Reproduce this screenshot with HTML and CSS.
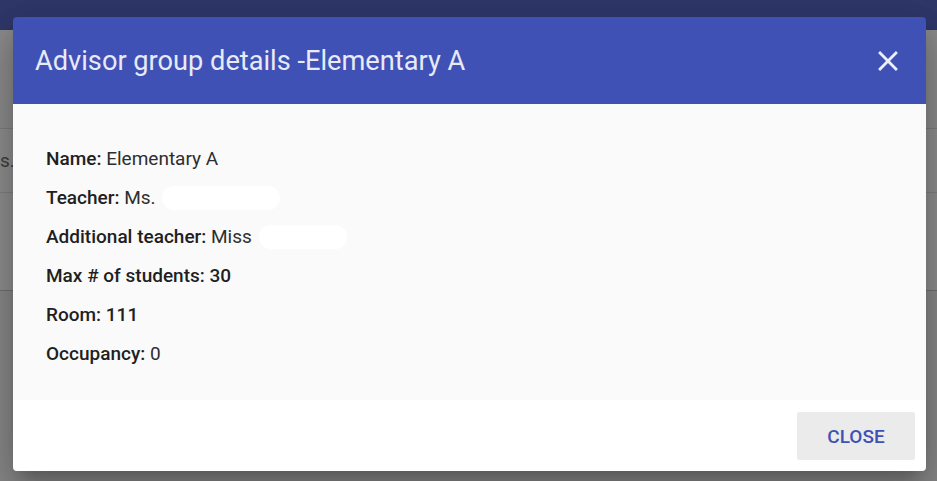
FILE: index.html
```html
<!DOCTYPE html>
<html>
<head>
<meta charset="utf-8">
<link rel="stylesheet" href="styles.css">
</head>
<body>
<div class="app">
  <div class="appbar"></div>
  <div class="toolbar"></div>
  <div class="row row-a"><span class="row-text">s.</span></div>
  <div class="row row-b"></div>
  <div class="row-rest"></div>
</div>
<div class="dialog">
  <div class="dialog-header">
    <h1 class="dialog-title">Advisor group details -Elementary A</h1>
    <svg class="close-icon" viewBox="0 0 24 24" width="24" height="24"><path d="M19 6.41 17.59 5 12 10.59 6.41 5 5 6.41 10.59 12 5 17.59 6.41 19 12 13.41 17.59 19 19 17.59 13.41 12z" fill="currentColor"/></svg>
  </div>
  <div class="dialog-body">
    <p class="field"><b>Name:</b> Elementary A</p>
    <p class="field"><b>Teacher:</b> Ms. <span class="redact redact-1"></span></p>
    <p class="field"><b>Additional teacher:</b> Miss <span class="redact redact-2"></span></p>
    <p class="field"><b>Max # of students: 30</b></p>
    <p class="field"><b>Room: 111</b></p>
    <p class="field"><b>Occupancy:</b> 0</p>
  </div>
  <div class="dialog-footer">
    <button class="btn-close">CLOSE</button>
  </div>
</div>
</body>
</html>
```

FILE: styles.css
```css
html, body {
  margin: 0;
  padding: 0;
  width: 937px;
  height: 481px;
  overflow: hidden;
}
body {
  background: #8a8a8a;
  font-family: Roboto, "Liberation Sans", sans-serif;
  position: relative;
}
.app {
  display: flex;
  flex-direction: column;
  height: 481px;
}
.appbar {
  height: 30px;
  background: #2f376a;
}
.toolbar {
  height: 98px;
  background: #8b8b8b;
  border-bottom: 1px solid #7c7c7c;
}
.row {
  background: #8d8d8d;
  border-bottom: 1px solid #7e7e7e;
  display: flex;
  align-items: center;
}
.row-a {
  height: 63px;
}
.row-b {
  height: 97px;
  border-bottom: 1px solid #6e6e6e;
}
.row-text {
  font-size: 19px;
  color: #3d3d3d;
  margin-left: 0;
}
.row-rest {
  flex: 1;
  background: #878787;
}
.dialog {
  position: absolute;
  left: 13px;
  top: 17px;
  width: 913px;
  height: 454px;
  border-radius: 4px;
  overflow: hidden;
  display: flex;
  flex-direction: column;
  box-shadow: 0 11px 15px -7px rgba(0,0,0,0.2), 0 24px 38px 3px rgba(0,0,0,0.14), 0 9px 46px 8px rgba(0,0,0,0.12);
}
.dialog-header {
  height: 87px;
  background: #3f51b5;
  display: flex;
  align-items: center;
  justify-content: space-between;
  padding: 0 21px 0 22px;
  color: #e8eaf6;
}
.dialog-title {
  margin: 0;
  font-size: 27.2px;
  font-weight: 400;
  color: #e8eaf6;
  letter-spacing: 0;
}
.close-icon {
  width: 34px;
  height: 34px;
  color: #eceef8;
}
.dialog-body {
  flex: 1;
  background: #fafafa;
  padding: 35px 33px 0;
}
.field {
  margin: 0;
  height: 39px;
  font-size: 19px;
  line-height: 30px;
  color: #2e2e2e;
  display: flex;
  align-items: center;
  white-space: pre;
}
.field b {
  font-weight: 500;
  color: #1f1f1f;
}
.redact {
  display: inline-block;
  height: 24px;
  background: #ffffff;
  border-radius: 12px;
  margin-left: 2px;
}
.redact-1 {
  width: 118px;
}
.redact-2 {
  width: 88px;
}
.dialog-footer {
  height: 71px;
  background: #ffffff;
  display: flex;
  justify-content: flex-end;
  align-items: flex-start;
  padding: 12px 11px 0 0;
  box-sizing: border-box;
}
.btn-close {
  width: 118px;
  height: 48px;
  border: none;
  border-radius: 2px;
  background: #ebebeb;
  color: #3f51b5;
  font-family: Roboto, "Liberation Sans", sans-serif;
  font-size: 19px;
  font-weight: 500;
  padding: 0;
}
```
